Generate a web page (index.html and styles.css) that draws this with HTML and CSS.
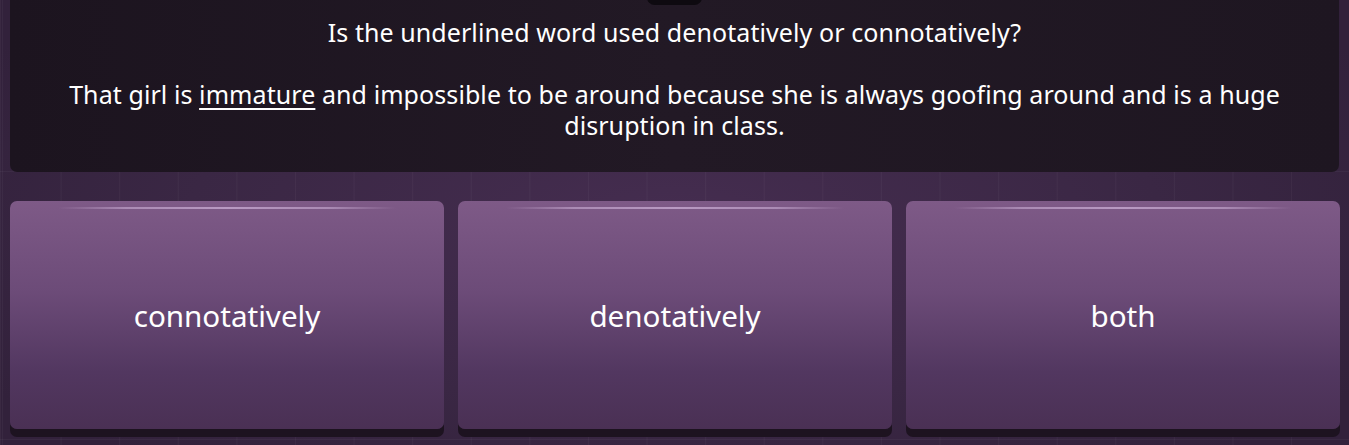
FILE: index.html
```html
<!DOCTYPE html>
<html>
<head>
<meta charset="utf-8">
<link rel="stylesheet" href="styles.css">
</head>
<body>
<div class="stage">
  <div class="tab"></div>
  <section class="question">
    <p class="line">Is the underlined word used denotatively or connotatively?</p>
    <p class="line gap">That girl is <u>immature</u> and impossible to be around because she is always goofing around and is a huge disruption in class.</p>
  </section>
  <div class="options">
    <div class="option"><span>connotatively</span></div>
    <div class="option"><span>denotatively</span></div>
    <div class="option"><span>both</span></div>
  </div>
</div>
</body>
</html>
```
FILE: styles.css
```css
html, body {
  margin: 0;
  padding: 0;
  height: 100%;
}
body {
  width: 1349px;
  height: 445px;
  overflow: hidden;
  font-family: "Noto Sans", "Open Sans", sans-serif;
  color: #ffffff;
  background-color: #36243f;
  background-image:
    linear-gradient(90deg, rgba(255,255,255,0.035) 1px, transparent 1px),
    linear-gradient(0deg, rgba(255,255,255,0.035) 1px, transparent 1px),
    radial-gradient(ellipse 60% 70% at 50% 50%, #452d50 0%, #3a2744 60%, #32213b 100%);
  background-size: 58.6px 58.6px, 58.6px 268px, 100% 100%;
  background-position: 2px 0, 0 172px, 0 0;
}
.stage {
  position: relative;
  padding: 0 10px 0 9px;
  height: 445px;
  box-sizing: border-box;
  border-left: 1px solid rgba(255,255,255,0.04);
}
.tab {
  position: absolute;
  left: 646px;
  top: -10px;
  width: 55px;
  height: 15px;
  border-radius: 8px;
  background: #0e0a10;
}
.question {
  height: 172px;
  box-sizing: border-box;
  padding: 17px 36px 0;
  background: linear-gradient(90deg, #1c141f 0%, #221925 50%, #1e1621 100%);
  border-radius: 0 0 7px 7px;
  text-align: center;
  font-size: 25px;
  line-height: 31px;
  letter-spacing: 0.08px;
}
.line {
  margin: 0;
}
.line.gap {
  margin-top: 31px;
  padding: 0 10px;
}
u {
  text-decoration-thickness: 2px;
  text-underline-offset: 4px;
}
.options {
  display: grid;
  grid-template-columns: repeat(3, 434px);
  gap: 14px;
  margin-top: 29px;
}
.option {
  position: relative;
  height: 228px;
  border-radius: 7px;
  background: linear-gradient(180deg, #7e5a87 0%, #6c4b78 40%, #523760 75%, #4a3054 100%);
  box-shadow: 0 8px 0 #1d1320;
  display: flex;
  align-items: center;
  justify-content: center;
  font-size: 29.6px;
}
.option::before {
  content: "";
  position: absolute;
  top: 6px;
  left: 48px;
  right: 48px;
  height: 2px;
  background: linear-gradient(90deg, rgba(190,160,200,0) 0%, rgba(190,160,200,0.7) 20%, rgba(200,170,210,0.8) 50%, rgba(190,160,200,0.7) 80%, rgba(190,160,200,0) 100%);
}
.option span {
  margin-top: 0;
}
```
